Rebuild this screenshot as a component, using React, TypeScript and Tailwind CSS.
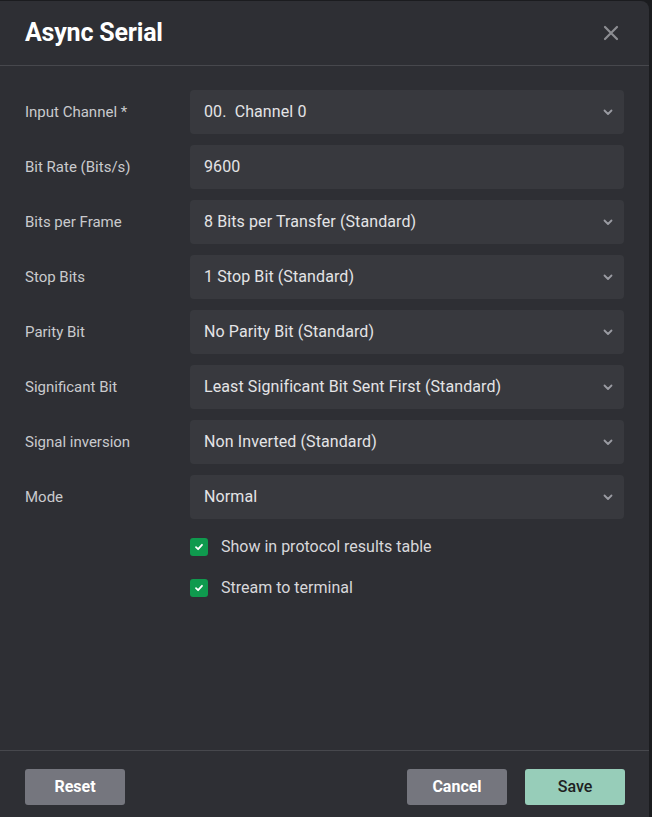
import React from "react";

const rows: { label: string; value: string; select: boolean }[] = [
  { label: "Input Channel *", value: "00.\u00a0 Channel 0", select: true },
  { label: "Bit Rate (Bits/s)", value: "9600", select: false },
  { label: "Bits per Frame", value: "8 Bits per Transfer (Standard)", select: true },
  { label: "Stop Bits", value: "1 Stop Bit (Standard)", select: true },
  { label: "Parity Bit", value: "No Parity Bit (Standard)", select: true },
  { label: "Significant Bit", value: "Least Significant Bit Sent First (Standard)", select: true },
  { label: "Signal inversion", value: "Non Inverted (Standard)", select: true },
  { label: "Mode", value: "Normal", select: true },
];

function Chevron() {
  return (
    <svg width="12" height="12" viewBox="0 0 12 12" fill="none" className="shrink-0">
      <path d="M2.5 4.5 L6 8 L9.5 4.5" stroke="#9a9ba2" strokeWidth="1.8" strokeLinecap="round" strokeLinejoin="round" />
    </svg>
  );
}

function Check() {
  return (
    <div className="w-[18px] h-[18px] rounded-[3px] bg-[#0f9a4e] flex items-center justify-center shrink-0">
      <svg width="10" height="10" viewBox="0 0 10 10" fill="none">
        <path d="M2 5.2 L4.1 7.2 L8 2.8" stroke="white" strokeWidth="1.8" strokeLinecap="round" strokeLinejoin="round" />
      </svg>
    </div>
  );
}

export default function App() {
  return (
    <div className="w-[652px] h-[817px] bg-[#1b1c1f] pt-[1px] overflow-hidden" style={{ fontFamily: "Roboto, 'Liberation Sans', sans-serif" }}>
      <div className="w-[649px] h-[816px] bg-[#2e2f34] rounded-tr-[8px] flex flex-col">
        <div className="h-[65px] flex items-center justify-between pl-[25px] pr-[30px] border-b border-[#47484d] shrink-0">
          <div className="text-[25px] font-bold text-white tracking-[-0.2px]">Async Serial</div>
          <svg width="16" height="16" viewBox="0 0 16 16" fill="none">
            <path d="M2 2 L14 14 M14 2 L2 14" stroke="#8c8d92" strokeWidth="2.2" strokeLinecap="round" />
          </svg>
        </div>
        <div className="flex-1 pt-[24px] pl-[25px] pr-[25px] flex flex-col">
          <div className="flex flex-col gap-[11px]">
            {rows.map((r) => (
              <div key={r.label} className="flex items-center">
                <div className="w-[165px] text-[15px] text-[#c9cacd]">{r.label}</div>
                <div className="flex-1 h-[44px] bg-[#38393e] rounded-[4px] flex items-center justify-between pl-[14px] pr-[10px]">
                  <span className="text-[16px] tracking-[0.1px] text-[#e4e4e6]">{r.value}</span>
                  {r.select && <Chevron />}
                </div>
              </div>
            ))}
          </div>
          <div className="pl-[165px] pt-[16px] flex flex-col gap-[17px]">
            <div className="flex items-center gap-[13px] h-[24px]">
              <Check />
              <span className="text-[16px] text-[#d8d8db]">Show in protocol results table</span>
            </div>
            <div className="flex items-center gap-[13px] h-[24px]">
              <Check />
              <span className="text-[16px] text-[#d8d8db]">Stream to terminal</span>
            </div>
          </div>
        </div>
        <div className="h-[67px] border-t border-[#47484d] flex items-start justify-between pl-[25px] pr-[24px] pt-[18px] shrink-0">
          <button className="w-[100px] h-[36px] rounded-[3px] bg-[#75767e] text-white font-bold text-[16px]">Reset</button>
          <div className="flex gap-[18px]">
            <button className="w-[100px] h-[36px] rounded-[3px] bg-[#75767e] text-white font-bold text-[16px]">Cancel</button>
            <button className="w-[100px] h-[36px] rounded-[3px] bg-[#97cdb9] text-[#1e1f22] font-medium text-[16px]">Save</button>
          </div>
        </div>
      </div>
    </div>
  );
}
